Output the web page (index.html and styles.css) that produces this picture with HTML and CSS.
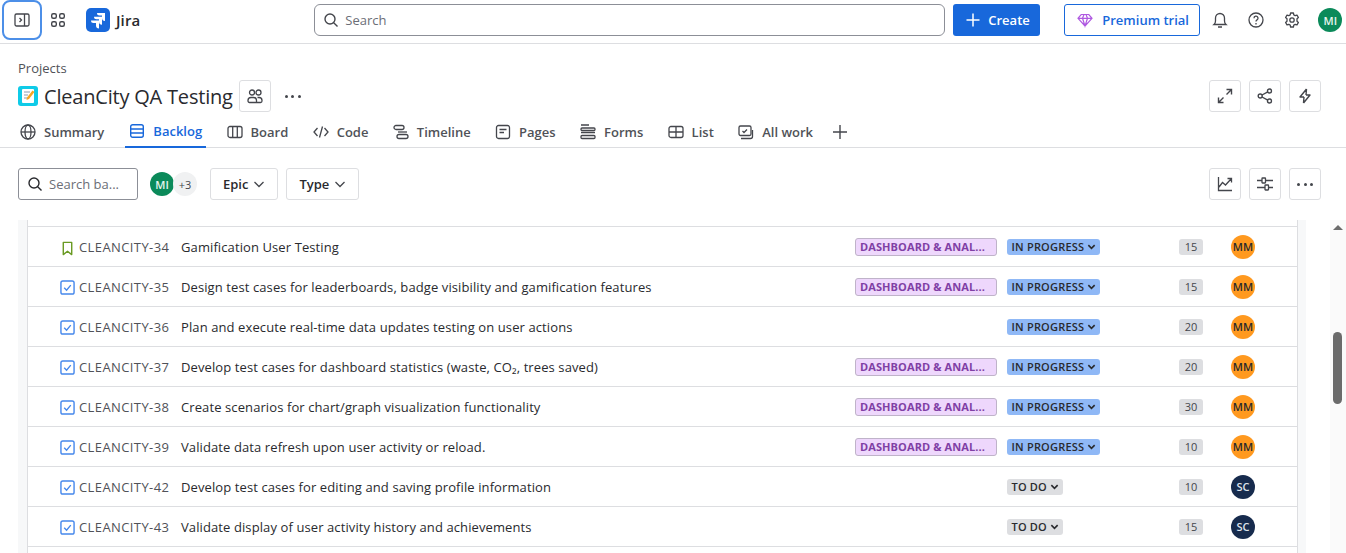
FILE: index.html
```html
<!DOCTYPE html>
<html>

<head>
    <meta charset="utf-8" />
    <title>Backlog - CleanCity QA Testing</title>
    <link rel="stylesheet" href="styles.css">
</head>

<body>
    <svg class="defs">
        <symbol id="story" viewBox="0 0 16 16"><path d="M3.500 1.500h9v13L8 11l-4.500 3.500z" fill="none" stroke="#6a9a23" stroke-width="1.500" stroke-linejoin="round"/></symbol>
        <symbol id="task" viewBox="0 0 16 16"><rect x="1" y="1" width="14" height="14" rx="2" fill="#fff" stroke="#4688ec" stroke-width="1.500"/><path d="M4.500 8.300l2.500 2.500 4.500-5.300" fill="none" stroke="#4688ec" stroke-width="1.500"/></symbol>
        <symbol id="chev" viewBox="0 0 10 10"><path d="M1.500 3.500L5 7l3.500-3.500" fill="none" stroke="currentColor" stroke-width="1.800"/></symbol>
    </svg>

    <header class="topbar">
        <button class="sidebar-btn">
            <svg width="16" height="16" viewBox="0 0 16 16" fill="none" stroke="#44464c" stroke-width="1.300"><rect x="1" y="2" width="14" height="12" rx="1.500"/><path d="M10.500 2v12M5.500 6l2 2-2 2"/></svg>
        </button>
        <svg class="apps" width="16" height="16" viewBox="0 0 16 16" fill="none" stroke="#44464c" stroke-width="1.400"><rect x="1.700" y="1.700" width="4.600" height="4.600" rx="1.500"/><rect x="9.700" y="1.700" width="4.600" height="4.600" rx="1.500"/><rect x="1.700" y="9.700" width="4.600" height="4.600" rx="1.500"/><rect x="9.700" y="9.700" width="4.600" height="4.600" rx="1.500"/></svg>
        <div class="logo">
            <svg width="24" height="24" viewBox="0 0 24 24"><rect width="24" height="24" rx="5" fill="#1868db"/><path d="M11 5h8v8a3 3 0 0 1-3-3V7.500h-2.500A2.500 2.500 0 0 1 11 5zM8 8.700h8v8a3 3 0 0 1-3-3v-2.500h-2.500A2.500 2.500 0 0 1 8 8.700zM5 12.400h8v8a3 3 0 0 1-3-3v-2.500H7.500A2.500 2.500 0 0 1 5 12.400z" fill="#fff"/></svg>
            <span>Jira</span>
        </div>
        <div class="global-search">
            <svg width="16" height="16" viewBox="0 0 16 16" fill="none" stroke="#44464c" stroke-width="1.400"><circle cx="7" cy="7" r="5"/><path d="M10.700 10.700L14.500 14.500"/></svg>
            <span>Search</span>
        </div>
        <button class="create-btn">
            <svg width="16" height="16" viewBox="0 0 16 16" fill="none" stroke="#fff" stroke-width="1.500"><path d="M8 1.500v13M1.500 8h13"/></svg>
            Create
        </button>
        <button class="premium-btn">
            <svg width="16" height="16" viewBox="0 0 16 16" fill="none" stroke="#af59e1" stroke-width="1.200"><path d="M4.200 2.500h7.600L15 6.300 8 14 1 6.300zM1 6.300h14M5.500 6.300L8 14l2.500-7.700M5.500 6.300L7 2.500M10.500 6.300L9 2.500"/></svg>
            Premium trial
        </button>
        <div class="top-icons">
            <svg width="16" height="16" viewBox="0 0 16 16" fill="none" stroke="#44464c" stroke-width="1.300"><path d="M2 12.500c1.200-1 1.500-2 1.500-3.500V6a4.500 4.500 0 0 1 9 0v3c0 1.500.3 2.500 1.500 3.500zM6 15h4"/></svg>
            <svg width="16" height="16" viewBox="0 0 16 16" fill="none" stroke="#44464c" stroke-width="1.300"><circle cx="8" cy="8" r="7"/><path d="M6 6.200a2 2 0 1 1 3 1.700c-.7.400-1 .8-1 1.600"/><path d="M8 11v1.400"/></svg>
            <svg width="16" height="16" viewBox="0 0 16 16" fill="none" stroke="#44464c" stroke-width="1.300"><circle cx="8" cy="8" r="2.200"/><path d="M6.600 1h2.800l.4 1.900 1.400.8 1.800-.6 1.400 2.400-1.400 1.300v2.400l1.400 1.300-1.400 2.400-1.800-.6-1.400.8-.4 1.900H6.600l-.4-1.900-1.400-.8-1.800.6-1.400-2.400 1.400-1.300V6.800L1.600 5.500 3 3.100l1.800.6 1.400-.8z" stroke-linejoin="round"/></svg>
            <span class="avatar green">MI</span>
        </div>
    </header>

    <section class="project-head">
        <div class="crumb">Projects</div>
        <div class="title-row">
            <svg class="project-icon" width="20" height="20" viewBox="0 0 20 20"><rect width="20" height="20" rx="3" fill="#0fcbe8"/><rect x="4" y="3" width="12" height="14" rx="1" fill="#fff"/><path d="M6 6h6M6 9h4M6 12h3" stroke="#8a9bb0" stroke-width="1"/><path d="M14.500 4.500l2 1.500-5.500 7-2.500 1 .5-2.500z" fill="#f6a623"/></svg>
            <h1>CleanCity QA Testing</h1>
            <button class="box-btn">
                <svg width="16" height="16" viewBox="0 0 16 16" fill="none" stroke="#44464c" stroke-width="1.300"><circle cx="5" cy="4.500" r="2.500"/><circle cx="11.500" cy="4.500" r="2.500"/><path d="M1 12.500a3 3 0 0 1 3-3h2.500a3 3 0 0 1 3 3v2H2.500A1.500 1.500 0 0 1 1 13zM10.500 9.500h1.500a3 3 0 0 1 3 3v.5a1.500 1.500 0 0 1-1.500 1.500h-4"/></svg>
            </button>
            <span class="dots">
                <i></i><i></i><i></i>
            </span>
            <div class="head-actions">
                <button class="box-btn">
                    <svg width="16" height="16" viewBox="0 0 16 16" fill="none" stroke="#44464c" stroke-width="1.400"><path d="M9.500 1.500h5v5M14.500 1.500L9.500 6.500M6.500 14.500h-5v-5M1.500 14.500l5-5"/></svg>
                </button>
                <button class="box-btn">
                    <svg width="16" height="16" viewBox="0 0 16 16" fill="none" stroke="#44464c" stroke-width="1.400"><circle cx="3.200" cy="8" r="2"/><circle cx="12.500" cy="3" r="2"/><circle cx="12.500" cy="13" r="2"/><path d="M5 7l5.800-3.100M5 9l5.800 3.100"/></svg>
                </button>
                <button class="box-btn">
                    <svg width="16" height="16" viewBox="0 0 16 16" fill="none" stroke="#44464c" stroke-width="1.400" stroke-linejoin="round"><path d="M9.500 1L3 9h4M6.500 15L13 7H9M9.500 1L9 7M6.500 15L7 9"/></svg>
                </button>
            </div>
        </div>
    </section>

    <nav class="tabs">
        <a class="tab tab-first">
            <svg width="16" height="16" viewBox="0 0 16 16" fill="none" stroke="#44464c" stroke-width="1.300"><circle cx="8" cy="8" r="7"/><ellipse cx="8" cy="8" rx="3" ry="7"/><path d="M1 8h14"/></svg>
            Summary
        </a>
        <a class="tab active">
            <svg width="16" height="16" viewBox="0 0 16 16" fill="none" stroke="#1868db" stroke-width="1.400"><rect x="1.700" y="1.700" width="12.600" height="12.600" rx="2"/><path d="M1.700 6h12.600M1.700 10h12.600"/></svg>
            Backlog
        </a>
        <a class="tab">
            <svg width="16" height="16" viewBox="0 0 16 16" fill="none" stroke="#44464c" stroke-width="1.300"><rect x="1" y="2.500" width="14" height="11" rx="2"/><path d="M5.700 2.500v11M10.300 2.500v11"/></svg>
            Board
        </a>
        <a class="tab">
            <svg width="16" height="16" viewBox="0 0 16 16" fill="none" stroke="#44464c" stroke-width="1.300"><path d="M4.500 4L1 8l3.500 4M11.500 4L15 8l-3.500 4M9.500 2.500l-3 11"/></svg>
            Code
        </a>
        <a class="tab">
            <svg width="16" height="16" viewBox="0 0 16 16" fill="none" stroke="#44464c" stroke-width="1.300"><rect x="1" y="1.500" width="10" height="4" rx="2"/><rect x="4" y="10.500" width="11" height="4" rx="2"/><path d="M5 8h9"/></svg>
            Timeline
        </a>
        <a class="tab">
            <svg width="16" height="16" viewBox="0 0 16 16" fill="none" stroke="#44464c" stroke-width="1.300"><rect x="1.500" y="1.500" width="13" height="13" rx="2"/><path d="M4.500 5.500h7M4.500 8.500h4.500"/></svg>
            Pages
        </a>
        <a class="tab">
            <svg width="16" height="16" viewBox="0 0 16 16" fill="none" stroke="#44464c" stroke-width="1.300"><path d="M1 1h8M1 8.500h14"/><rect x="1" y="4" width="14" height="2.500" rx="1"/><rect x="1" y="11.500" width="14" height="3" rx="1"/></svg>
            Forms
        </a>
        <a class="tab">
            <svg width="16" height="16" viewBox="0 0 16 16" fill="none" stroke="#44464c" stroke-width="1.300"><rect x="1" y="2.500" width="14" height="11" rx="2"/><path d="M1 8h14M8 2.500v11"/></svg>
            List
        </a>
        <a class="tab">
            <svg width="16" height="16" viewBox="0 0 16 16" fill="none" stroke="#44464c" stroke-width="1.300"><rect x="1" y="2" width="12" height="9.500" rx="1.500"/><path d="M4.500 7l1.500 1.500 3-3M3 14.500h9.500a2 2 0 0 0 2-2V6"/></svg>
            All work
        </a>
        <svg class="tab-add" width="16" height="16" viewBox="0 0 16 16" fill="none" stroke="#44464c" stroke-width="1.400"><path d="M8 1v14M1 8h14"/></svg>
    </nav>

    <section class="toolbar">
        <div class="backlog-search">
            <svg width="16" height="16" viewBox="0 0 16 16" fill="none" stroke="#292a2e" stroke-width="1.400"><circle cx="7" cy="7" r="5"/><path d="M10.700 10.700L14.500 14.500"/></svg>
            <span>Search ba...</span>
        </div>
        <div class="people-stack">
            <span class="avatar green">MI</span>
            <span class="avatar more">+3</span>
        </div>
        <button class="filter-btn">Epic <svg width="12" height="12" viewBox="0 0 12 12" fill="none" stroke="#44464c" stroke-width="1.300"><path d="M1.500 4L6 8.500 10.500 4"/></svg></button>
        <button class="filter-btn">Type <svg width="12" height="12" viewBox="0 0 12 12" fill="none" stroke="#44464c" stroke-width="1.300"><path d="M1.500 4L6 8.500 10.500 4"/></svg></button>
        <div class="head-actions">
            <button class="box-btn">
                <svg width="16" height="16" viewBox="0 0 16 16" fill="none" stroke="#44464c" stroke-width="1.300"><path d="M1.500 1v13.500H15M2 11l3.500-4.500 3 2.500L14 3M10.500 2.500H14.500V6.500"/></svg>
            </button>
            <button class="box-btn">
                <svg width="16" height="16" viewBox="0 0 16 16" fill="none" stroke="#44464c" stroke-width="1.300"><path d="M0 4.500h5M9 4.500h7M0 11.500h8M12 11.500h4"/><rect x="5" y="2" width="3.500" height="5" rx=".5"/><rect x="8" y="9" width="3.500" height="5" rx=".5"/></svg>
            </button>
            <button class="box-btn">
                <span class="dots small"><i></i><i></i><i></i></span>
            </button>
        </div>
    </section>

    <main class="work-area">
        <div class="issue-list">
            <div class="row head-gap"></div>
            <div class="row">
                <svg class="type story" width="15" height="15"><use href="#story"/></svg>
                <span class="key">CLEANCITY-34</span>
                <span class="summary">Gamification User Testing</span>
                <span class="epic">DASHBOARD &amp; ANAL...</span>
                <span class="status progress">IN PROGRESS <svg width="9" height="9"><use href="#chev"/></svg></span>
                <span class="points">15</span>
                <span class="avatar orange">MM</span>
            </div>
            <div class="row">
                <svg class="type" width="15" height="15"><use href="#task"/></svg>
                <span class="key">CLEANCITY-35</span>
                <span class="summary">Design test cases for leaderboards, badge visibility and gamification features</span>
                <span class="epic">DASHBOARD &amp; ANAL...</span>
                <span class="status progress">IN PROGRESS <svg width="9" height="9"><use href="#chev"/></svg></span>
                <span class="points">15</span>
                <span class="avatar orange">MM</span>
            </div>
            <div class="row">
                <svg class="type" width="15" height="15"><use href="#task"/></svg>
                <span class="key">CLEANCITY-36</span>
                <span class="summary">Plan and execute real-time data updates testing on user actions</span>
                <span class="no-epic"></span>
                <span class="status progress">IN PROGRESS <svg width="9" height="9"><use href="#chev"/></svg></span>
                <span class="points">20</span>
                <span class="avatar orange">MM</span>
            </div>
            <div class="row">
                <svg class="type" width="15" height="15"><use href="#task"/></svg>
                <span class="key">CLEANCITY-37</span>
                <span class="summary">Develop test cases for dashboard statistics (waste, CO₂, trees saved)</span>
                <span class="epic">DASHBOARD &amp; ANAL...</span>
                <span class="status progress">IN PROGRESS <svg width="9" height="9"><use href="#chev"/></svg></span>
                <span class="points">20</span>
                <span class="avatar orange">MM</span>
            </div>
            <div class="row">
                <svg class="type" width="15" height="15"><use href="#task"/></svg>
                <span class="key">CLEANCITY-38</span>
                <span class="summary">Create scenarios for chart/graph visualization functionality</span>
                <span class="epic">DASHBOARD &amp; ANAL...</span>
                <span class="status progress">IN PROGRESS <svg width="9" height="9"><use href="#chev"/></svg></span>
                <span class="points">30</span>
                <span class="avatar orange">MM</span>
            </div>
            <div class="row">
                <svg class="type" width="15" height="15"><use href="#task"/></svg>
                <span class="key">CLEANCITY-39</span>
                <span class="summary">Validate data refresh upon user activity or reload.</span>
                <span class="epic">DASHBOARD &amp; ANAL...</span>
                <span class="status progress">IN PROGRESS <svg width="9" height="9"><use href="#chev"/></svg></span>
                <span class="points">10</span>
                <span class="avatar orange">MM</span>
            </div>
            <div class="row">
                <svg class="type" width="15" height="15"><use href="#task"/></svg>
                <span class="key">CLEANCITY-42</span>
                <span class="summary">Develop test cases for editing and saving profile information</span>
                <span class="no-epic"></span>
                <span class="status todo">TO DO <svg width="9" height="9"><use href="#chev"/></svg></span>
                <span class="points">10</span>
                <span class="avatar navy">SC</span>
            </div>
            <div class="row">
                <svg class="type" width="15" height="15"><use href="#task"/></svg>
                <span class="key">CLEANCITY-43</span>
                <span class="summary">Validate display of user activity history and achievements</span>
                <span class="no-epic"></span>
                <span class="status todo">TO DO <svg width="9" height="9"><use href="#chev"/></svg></span>
                <span class="points">15</span>
                <span class="avatar navy">SC</span>
            </div>
            <div class="row"></div>
        </div>
        <div class="scrollbar">
            <span class="arrow"></span>
            <span class="thumb"></span>
        </div>
    </main>
</body>

</html>
```

FILE: styles.css
```css
* {
    box-sizing: border-box;
}

html,
body {
    margin: 0;
    height: 553px;
    overflow: hidden;
}

body {
    font-family: "Open Sans", "Noto Sans", sans-serif;
    font-size: 13px;
    color: #292a2e;
    background: #fff;
}

button {
    font-family: inherit;
    cursor: pointer;
}

.defs {
    display: none;
}

.avatar {
    display: flex;
    align-items: center;
    justify-content: center;
    width: 24px;
    height: 24px;
    border-radius: 50%;
    font-size: 11px;
    font-weight: 600;
}

.avatar.green {
    background: #0b8a5a;
    color: #e6f5ee;
}

.avatar.orange {
    background: #ff991f;
    color: #292a2e;
}

.avatar.navy {
    background: #172b4d;
    color: #dfe5ee;
}

/* top bar */
.topbar {
    display: flex;
    align-items: center;
    height: 44px;
    padding-bottom: 3px;
    border-bottom: 1px solid #dddee1;
}

.sidebar-btn {
    display: flex;
    align-items: center;
    justify-content: center;
    width: 40px;
    height: 40px;
    margin-left: 2px;
    background: #fff;
    border: 2px solid #4c8fe8;
    border-radius: 8px;
}

.apps {
    margin-left: 8px;
}

.logo {
    display: flex;
    align-items: center;
    gap: 6px;
    margin-left: 20px;
    font-size: 15px;
    font-weight: 600;
    letter-spacing: .1px;
}

.global-search {
    display: flex;
    align-items: center;
    gap: 6px;
    width: 631px;
    height: 32px;
    margin-left: 174px;
    padding-left: 8px;
    border: 1px solid #8c8f97;
    border-radius: 6px;
    color: #6b6e76;
}

.create-btn {
    display: flex;
    align-items: center;
    gap: 7px;
    height: 32px;
    width: 87px;
    margin-left: 8px;
    padding: 0 0 0 12px;
    border: 0;
    border-radius: 3px;
    background: #1868db;
    color: #fff;
    font-size: 13px;
    font-weight: 600;
}

.premium-btn {
    display: flex;
    align-items: center;
    gap: 9px;
    width: 136px;
    height: 32px;
    margin-left: 24px;
    padding: 0 0 0 12px;
    border: 1px solid #1868db;
    border-radius: 3px;
    background: #fff;
    color: #1868db;
    font-size: 13px;
    font-weight: 600;
}

.top-icons {
    display: flex;
    align-items: center;
    gap: 20px;
    margin-left: 12px;
}

.top-icons .avatar {
    margin-left: -2px;
}

/* project header */
.project-head {
    padding: 16px 25px 0 18px;
}

.crumb {
    height: 17px;
    line-height: 17px;
    color: #505258;
}

.title-row {
    display: flex;
    align-items: center;
    height: 32px;
    margin-top: 3px;
}

.title-row h1 {
    margin: 0 6px;
    font-size: 20px;
    font-weight: 500;
    letter-spacing: -.2px;
}

.box-btn {
    display: flex;
    align-items: center;
    justify-content: center;
    width: 32px;
    height: 32px;
    padding: 0;
    background: #fff;
    border: 1px solid #dddee1;
    border-radius: 3px;
}

.dots {
    display: flex;
    gap: 3.500px;
    margin-left: 14px;
}

.dots i {
    width: 3px;
    height: 3px;
    border-radius: 50%;
    background: #44464c;
}

.dots.small {
    margin: 0;
}

.head-actions {
    display: flex;
    gap: 8px;
    margin-left: auto;
}

/* tabs */
.tabs {
    display: flex;
    align-items: center;
    height: 32px;
    margin-top: 4px;
    padding-left: 16px;
    border-bottom: 1px solid #dddee1;
}

.tab {
    display: flex;
    align-items: center;
    gap: 8px;
    height: 32px;
    padding: 0 4px;
    margin-right: 16.400px;
    color: #505258;
    font-weight: 600;
}

.tab-first {
    margin-right: 17px;
}

.tab.active {
    color: #1868db;
    border-bottom: 2px solid #1868db;
}

.tab-add {
    margin-left: -1px;
}

/* toolbar */
.toolbar {
    display: flex;
    align-items: center;
    height: 32px;
    margin-top: 20px;
    padding: 0 25px 0 18px;
}

.backlog-search {
    display: flex;
    align-items: center;
    gap: 6px;
    width: 120px;
    height: 32px;
    padding-left: 8px;
    border: 1px solid #8c8f97;
    border-radius: 3px;
    color: #6b6e76;
}

.people-stack {
    display: flex;
    margin-left: 12px;
}

.avatar.more {
    margin-left: -1px;
    background: #f0f1f2;
    color: #44464c;
    font-weight: 400;
}

.filter-btn {
    display: flex;
    align-items: center;
    gap: 5px;
    height: 32px;
    margin-left: 13px;
    padding: 0 12px;
    background: #fff;
    border: 1px solid #dddee1;
    border-radius: 3px;
    color: #292a2e;
    font-size: 13px;
    font-weight: 600;
}

.filter-btn + .filter-btn {
    margin-left: 8px;
}

/* issue rows */
.work-area {
    display: flex;
    height: 333px;
    margin-top: 20px;
    padding-left: 18px;
    overflow: hidden;
}

.issue-list {
    width: 1288px;
    height: 333px;
    padding: 0 8px 0 9px;
    overflow: hidden;
    background: #f7f8f9;
}

.row {
    display: grid;
    grid-template-columns: 19px 102px 674px 152px 172px 52px 1fr;
    align-items: center;
    height: 40px;
    padding-left: 32px;
    background: #fff;
    border-left: 1px solid #dddee1;
    border-right: 1px solid #dddee1;
    border-bottom: 1px solid #dddee1;
}

.row.head-gap {
    display: block;
    height: 7px;
}

.type {
    margin-top: 2px;
}

.type.story {
    margin-top: 3px;
}

.key {
    color: #505258;
    letter-spacing: .4px;
    white-space: nowrap;
}

.summary {
    letter-spacing: .1px;
    white-space: nowrap;
}

.epic {
    width: 142px;
    height: 18px;
    padding-left: 4px;
    line-height: 16px;
    font-size: 11px;
    font-weight: 700;
    letter-spacing: .1px;
    color: #803fa5;
    background: #eed7fc;
    border: 1px solid #bfb3c9;
    border-radius: 3px;
    white-space: nowrap;
}

.status {
    display: inline-flex;
    align-items: center;
    gap: 3px;
    justify-self: start;
    height: 16px;
    padding: 0 4px 0 4.500px;
    font-size: 11px;
    font-weight: 600;
    letter-spacing: .2px;
    border-radius: 3px;
    white-space: nowrap;
}

.status.progress {
    background: #8fb8f6;
}

.status.todo {
    background: #dddee1;
}

.points {
    width: 24px;
    height: 16px;
    line-height: 16px;
    text-align: center;
    font-size: 11px;
    background: #dddee1;
    border-radius: 3px;
    color: #44464c;
}

/* scrollbar */
.scrollbar {
    position: relative;
    width: 16px;
    margin-left: 24px;
    background: #fafafa;
}

.arrow {
    position: absolute;
    top: 5px;
    left: 3px;
    border: 5px solid transparent;
    border-top: 0;
    border-bottom: 5px solid #6b6b6b;
}

.thumb {
    position: absolute;
    top: 112px;
    left: 3px;
    width: 9px;
    height: 72px;
    border-radius: 5px;
    background: #6b6b6b;
}
```
